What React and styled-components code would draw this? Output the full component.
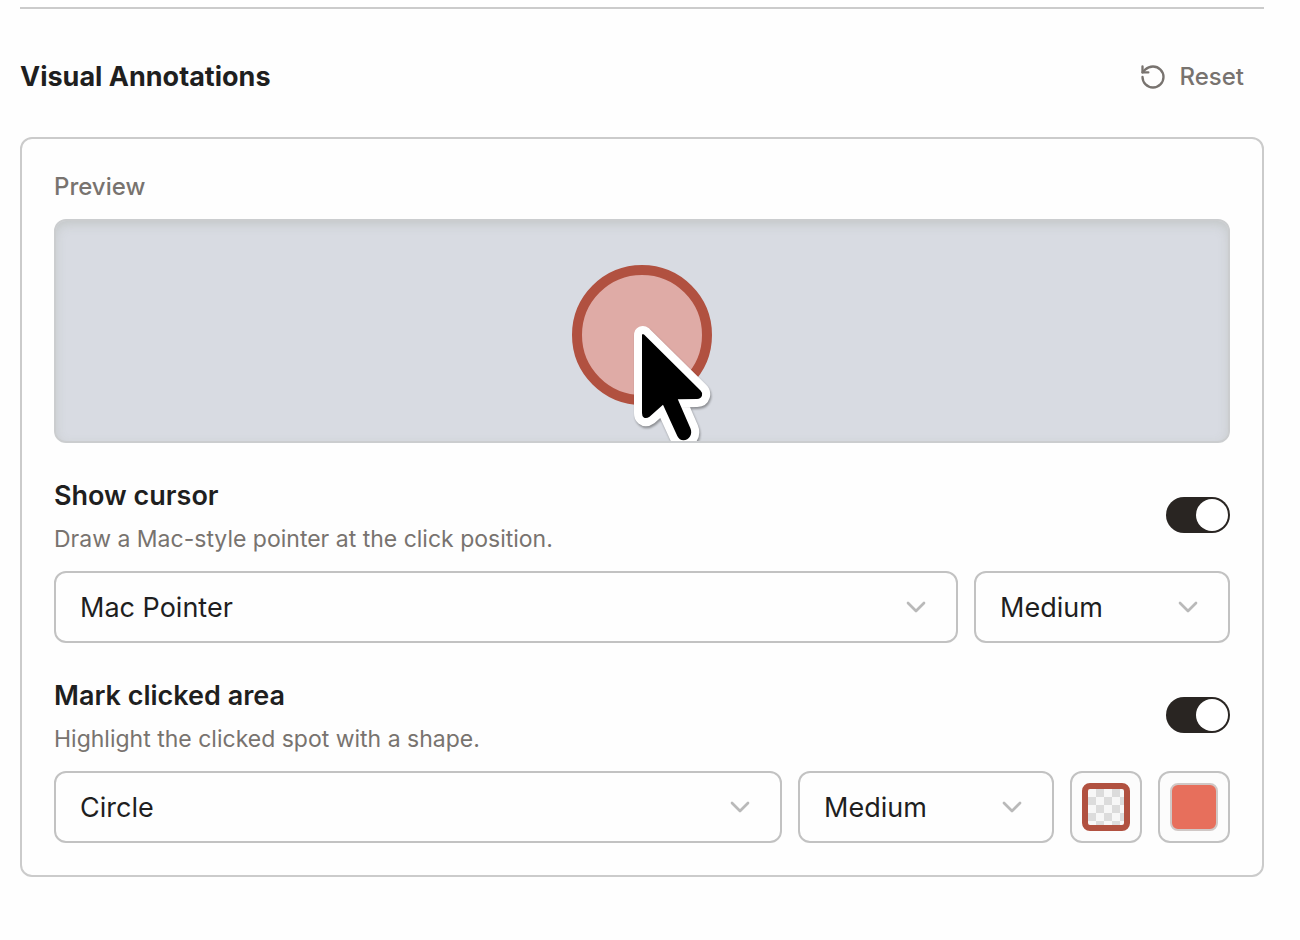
import { useState } from 'react';
import styled, { createGlobalStyle } from 'styled-components';
import { ChevronDown, RotateCcw } from 'lucide-react';

const GlobalStyle = createGlobalStyle`
  *,
  *::before {
    box-sizing: border-box;
  }

  body {
    margin: 0;
    background: #fefefe;
    color: #1f1f1f;
    font-family: Inter, 'Liberation Sans', sans-serif;
  }

  button,
  select,
  input {
    font: inherit;
    color: inherit;
    margin: 0;
  }
`;

const Section = styled.section`
  margin: 7px 36px 0 20px;
  padding-bottom: 32px;
  border-top: 2px solid #cbcbcb;
`;

const SectionHeader = styled.header`
  display: flex;
  align-items: center;
  justify-content: space-between;
  padding: 48px 20px 40px 0;
`;

const SectionTitle = styled.h2`
  margin: 0;
  font-size: 27px;
  line-height: 40px;
  font-weight: 700;
`;

const ResetButton = styled.button`
  display: flex;
  align-items: center;
  gap: 12px;
  padding: 0;
  border: 0;
  background: none;
  color: #78736f;
  font-size: 24px;
  line-height: 40px;
  font-weight: 500;
  cursor: pointer;
`;

const Panel = styled.div`
  display: flex;
  flex-direction: column;
  gap: 32px;
  padding: 32px;
  border: 2px solid #cbcbcb;
  border-radius: 12px;
`;

const PreviewLabel = styled.div`
  margin-bottom: 16px;
  color: #78736f;
  font-size: 24px;
  line-height: 32px;
  font-weight: 500;
`;

const PreviewBox = styled.div`
  display: flex;
  justify-content: center;
  overflow: hidden;
  border: 2px solid #cbcdcf;
  border-radius: 12px;
  background: #d8dbe2;
  box-shadow: inset 0 4px 12px -2px rgba(140, 145, 125, 0.3);
`;

const PointerShape = styled.g`
  filter: drop-shadow(1px 2px 1px rgba(0, 0, 0, 0.35));
`;

const SettingHeader = styled.div`
  display: flex;
  align-items: center;
  justify-content: space-between;
  margin-bottom: 16px;
`;

const SettingText = styled.div`
  display: flex;
  flex-direction: column;
  gap: 6px;
`;

const SettingLabel = styled.label`
  font-size: 27px;
  line-height: 42px;
  font-weight: 600;
`;

const SettingDescription = styled.p`
  margin: 0;
  color: #78736f;
  font-size: 23px;
  line-height: 32px;
`;

const Toggle = styled.input`
  appearance: none;
  flex: none;
  width: 64px;
  height: 36px;
  padding: 2px;
  border-radius: 18px;
  background: ${({ checked }) => (checked ? '#292522' : '#c4c4c4')};
  cursor: pointer;

  &::before {
    content: '';
    display: block;
    width: 32px;
    height: 32px;
    margin-left: ${({ checked }) => (checked ? 'auto' : '0')};
    border-radius: 50%;
    background: #fff;
  }
`;

const Controls = styled.div`
  display: flex;
  gap: 16px;
`;

const SelectWrap = styled.div`
  display: grid;
  align-items: center;
  flex: ${({ $compact }) => ($compact ? '0 0 256px' : '1 1 0')};
  min-width: 0;

  > * {
    grid-area: 1 / 1;
  }

  svg {
    justify-self: end;
    margin-right: 26px;
    color: #b9b9b9;
    pointer-events: none;
  }
`;

const StyledSelect = styled.select`
  appearance: none;
  width: 100%;
  height: 72px;
  padding: 0 64px 0 24px;
  border: 2px solid #c2c2c2;
  border-radius: 12px;
  background: #fefefe;
  font-size: 27px;
  cursor: pointer;
`;

const SwatchButton = styled.button`
  display: grid;
  place-items: center;
  flex: none;
  width: 72px;
  height: 72px;
  padding: 0;
  border: 2px solid #c2c2c2;
  border-radius: 12px;
  background: #fcfcfc;
  cursor: pointer;
`;

const StrokeSwatch = styled.span`
  width: 48px;
  height: 48px;
  border: 6px solid #b15140;
  border-radius: 8px;
  background: conic-gradient(#dcdcdc 25%, #f7f7f7 0 50%, #dcdcdc 0 75%, #f7f7f7 0) 0 0 / 16px 16px;
`;

const FillSwatch = styled.span`
  width: 48px;
  height: 48px;
  border: 2px solid #d0c8c6;
  border-radius: 8px;
  background: #e76f5c;
`;

const pointerPath =
  'M110 114.5Q110 112 112 113.6L168.5 169.5Q170.8 171.8 170 174.6Q169 177.9 165 178L145.8 178.2L158.4 207.3C161 213.5 157 219.3 151.5 219.3Q147.3 219.2 145.3 215L131 183.7L117.5 195.7Q114 198.2 111.5 196.2Q110 195 110 192Z';

const ClickPreview = ({ showCursor, showMark }) => (
  <svg width="220" height="220" viewBox="0 0 220 220" aria-hidden="true">
    {showMark && (
      <circle cx="110" cy="114" r="65" fill="#dfaba6" stroke="#b15140" strokeWidth="10" />
    )}
    {showCursor && (
      <PointerShape>
        <path d={pointerPath} fill="#fff" stroke="#fff" strokeWidth="16" strokeLinejoin="round" />
        <path d={pointerPath} fill="#000" />
      </PointerShape>
    )}
  </svg>
);

const Select = ({ label, options, compact }) => (
  <SelectWrap $compact={compact}>
    <StyledSelect aria-label={label} defaultValue={options[0]}>
      {options.map((option) => (
        <option key={option}>{option}</option>
      ))}
    </StyledSelect>
    <ChevronDown size={32} aria-hidden="true" />
  </SelectWrap>
);

const Setting = ({ id, label, description, checked, onChange, children }) => (
  <div>
    <SettingHeader>
      <SettingText>
        <SettingLabel htmlFor={id}>{label}</SettingLabel>
        <SettingDescription>{description}</SettingDescription>
      </SettingText>
      <Toggle
        id={id}
        type="checkbox"
        role="switch"
        checked={checked}
        onChange={(event) => onChange(event.target.checked)}
      />
    </SettingHeader>
    <Controls>{children}</Controls>
  </div>
);

const App = () => {
  const [showCursor, setShowCursor] = useState(true);
  const [showMark, setShowMark] = useState(true);

  const reset = () => {
    setShowCursor(true);
    setShowMark(true);
  };

  return (
    <>
      <GlobalStyle />
      <Section>
        <SectionHeader>
          <SectionTitle>Visual Annotations</SectionTitle>
          <ResetButton type="button" onClick={reset}>
            <RotateCcw size={28} aria-hidden="true" />
            Reset
          </ResetButton>
        </SectionHeader>

        <Panel>
          <div>
            <PreviewLabel>Preview</PreviewLabel>
            <PreviewBox>
              <ClickPreview showCursor={showCursor} showMark={showMark} />
            </PreviewBox>
          </div>

          <Setting
            id="show-cursor"
            label="Show cursor"
            description="Draw a Mac-style pointer at the click position."
            checked={showCursor}
            onChange={setShowCursor}
          >
            <Select label="Cursor style" options={['Mac Pointer']} />
            <Select label="Cursor size" options={['Medium']} compact />
          </Setting>

          <Setting
            id="mark-area"
            label="Mark clicked area"
            description="Highlight the clicked spot with a shape."
            checked={showMark}
            onChange={setShowMark}
          >
            <Select label="Shape" options={['Circle']} />
            <Select label="Shape size" options={['Medium']} compact />
            <SwatchButton type="button" aria-label="Stroke color">
              <StrokeSwatch />
            </SwatchButton>
            <SwatchButton type="button" aria-label="Fill color">
              <FillSwatch />
            </SwatchButton>
          </Setting>
        </Panel>
      </Section>
    </>
  );
};

export default App;
